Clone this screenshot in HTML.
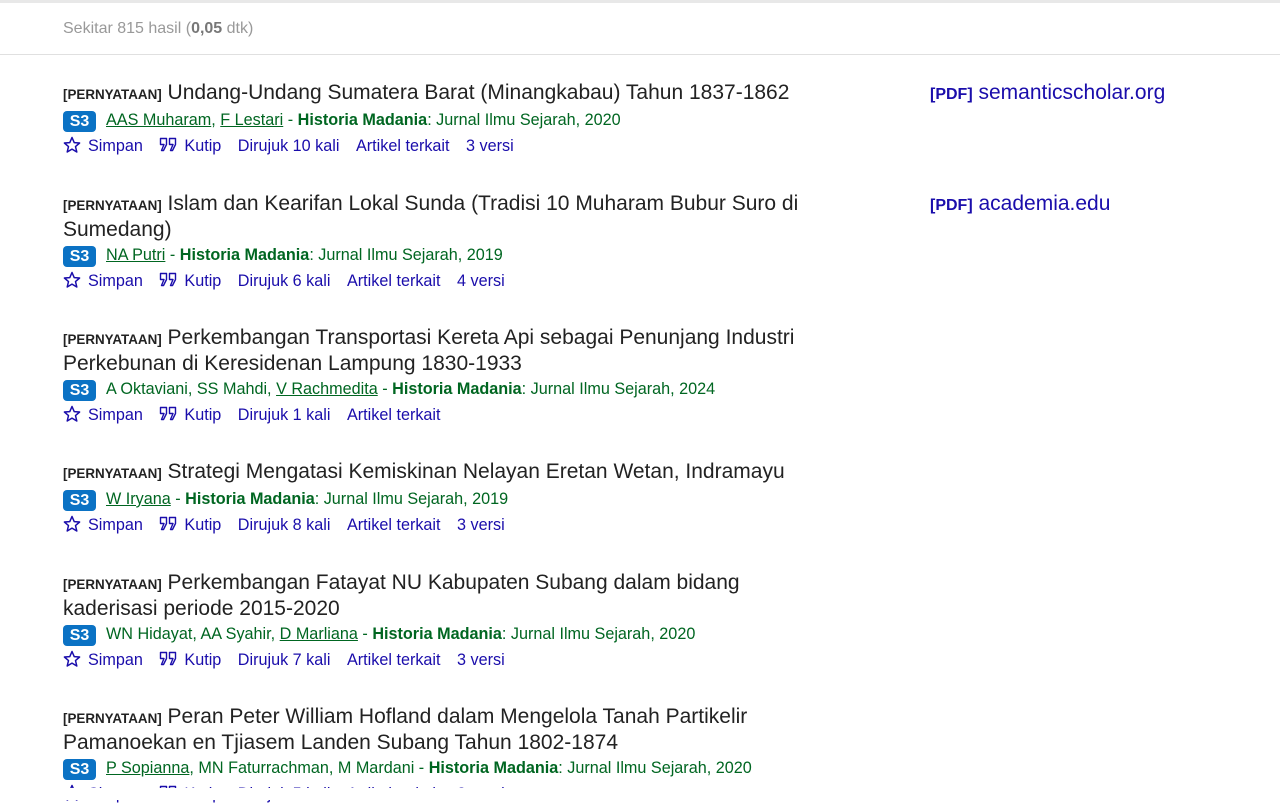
<!DOCTYPE html>
<html><head><meta charset="utf-8"><style>
body{margin:0;background:#fff;font-family:"Liberation Sans",Arial,sans-serif;width:1280px;height:800px;overflow:hidden;position:relative}
.top{position:absolute;left:0;top:0;width:1280px;height:3px;background:#e8e8e8}
.cnt{position:absolute;left:63px;top:19px;font-size:16px;line-height:20px;color:#999}
.cnt b{color:#777}
.div{position:absolute;left:0;top:54px;width:1280px;height:1px;background:#e0e0e0}
.r{position:absolute;left:63px;width:760px}
.t{font-size:21px;line-height:24px;color:#222}
.t small{font-size:13.4px;font-weight:bold;color:#222}
.m{margin-top:0;height:26px;line-height:26px;font-size:16.2px;color:#006621;white-space:nowrap}
.m u{text-decoration:underline}
.b{display:inline-block;background:#0b72c4;color:#fff;font-weight:bold;font-size:16px;width:33px;height:21px;line-height:21px;text-align:center;border-radius:4px;margin-right:10px;vertical-align:-1px}
.a{height:26px;line-height:26px;font-size:16.2px;color:#1a0dab;white-space:nowrap}
.a span{margin-right:16.5px}
.a svg{vertical-align:-3px;margin-right:7px}
.p{position:absolute;left:930px;font-size:21px;line-height:24px;color:#1a0dab}
.p small{font-size:16px;font-weight:bold}
.clip{position:absolute;left:0;top:788px;width:1280px;height:12px;background:#fff}
</style></head><body>
<div class="top"></div>
<div class="cnt">Sekitar 815 hasil (<b>0,05</b> dtk)</div>
<div class="div"></div>

<svg width="0" height="0" style="position:absolute"><defs>
<symbol id="star" viewBox="0 0 18 18"><path d="M9 1.5l2.2 5.1 5.4.4-4.1 3.6 1.3 5.4L9 13.1 4.2 16l1.3-5.4L1.4 7l5.4-.4z" fill="none" stroke="#1a0dab" stroke-width="1.5" stroke-linejoin="round"/></symbol>
<symbol id="q" viewBox="0 0 18 18"><path d="M1.5 2.5h6v6l-3 6h-2l2.5-6h-3.5zM10.5 2.5h6v6l-3 6h-2l2.5-6h-3.5z" fill="none" stroke="#1a0dab" stroke-width="1.4" stroke-linejoin="round"/></symbol>
</defs></svg>

<div class="r" style="top:81px">
<div class="t"><small>[PERNYATAAN]</small> Undang-Undang Sumatera Barat (Minangkabau) Tahun 1837-1862</div>
<div class="m"><span class="b">S3</span><u>AAS Muharam</u>, <u>F Lestari</u> - <b>Historia Madania</b>: Jurnal Ilmu Sejarah, 2020</div>
<div class="a"><span><svg width="18" height="18"><use href="#star"/></svg>Simpan</span><span><svg width="18" height="18"><use href="#q"/></svg>Kutip</span><span>Dirujuk 10 kali</span><span>Artikel terkait</span><span>3 versi</span></div>
</div>
<div class="p" style="top:81px"><small>[PDF]</small> semanticscholar.org</div>

<div class="r" style="top:192px">
<div class="t"><small>[PERNYATAAN]</small> Islam dan Kearifan Lokal Sunda (Tradisi 10 Muharam Bubur Suro di Sumedang)</div>
<div class="m"><span class="b">S3</span><u>NA Putri</u> - <b>Historia Madania</b>: Jurnal Ilmu Sejarah, 2019</div>
<div class="a"><span><svg width="18" height="18"><use href="#star"/></svg>Simpan</span><span><svg width="18" height="18"><use href="#q"/></svg>Kutip</span><span>Dirujuk 6 kali</span><span>Artikel terkait</span><span>4 versi</span></div>
</div>
<div class="p" style="top:192px"><small>[PDF]</small> academia.edu</div>

<div class="r" style="top:326px">
<div class="t"><small>[PERNYATAAN]</small> Perkembangan Transportasi Kereta Api sebagai Penunjang Industri Perkebunan di Keresidenan Lampung 1830-1933</div>
<div class="m"><span class="b">S3</span>A Oktaviani, SS Mahdi, <u>V Rachmedita</u> - <b>Historia Madania</b>: Jurnal Ilmu Sejarah, 2024</div>
<div class="a"><span><svg width="18" height="18"><use href="#star"/></svg>Simpan</span><span><svg width="18" height="18"><use href="#q"/></svg>Kutip</span><span>Dirujuk 1 kali</span><span>Artikel terkait</span></div>
</div>

<div class="r" style="top:460px">
<div class="t"><small>[PERNYATAAN]</small> Strategi Mengatasi Kemiskinan Nelayan Eretan Wetan, Indramayu</div>
<div class="m"><span class="b">S3</span><u>W Iryana</u> - <b>Historia Madania</b>: Jurnal Ilmu Sejarah, 2019</div>
<div class="a"><span><svg width="18" height="18"><use href="#star"/></svg>Simpan</span><span><svg width="18" height="18"><use href="#q"/></svg>Kutip</span><span>Dirujuk 8 kali</span><span>Artikel terkait</span><span>3 versi</span></div>
</div>

<div class="r" style="top:571px">
<div class="t"><small>[PERNYATAAN]</small> Perkembangan Fatayat NU Kabupaten Subang dalam bidang kaderisasi periode 2015-2020</div>
<div class="m"><span class="b">S3</span>WN Hidayat, AA Syahir, <u>D Marliana</u> - <b>Historia Madania</b>: Jurnal Ilmu Sejarah, 2020</div>
<div class="a"><span><svg width="18" height="18"><use href="#star"/></svg>Simpan</span><span><svg width="18" height="18"><use href="#q"/></svg>Kutip</span><span>Dirujuk 7 kali</span><span>Artikel terkait</span><span>3 versi</span></div>
</div>

<div class="r" style="top:705px">
<div class="t"><small>[PERNYATAAN]</small> Peran Peter William Hofland dalam Mengelola Tanah Partikelir Pamanoekan en Tjiasem Landen Subang Tahun 1802-1874</div>
<div class="m"><span class="b">S3</span><u>P Sopianna</u>, MN Faturrachman, M Mardani - <b>Historia Madania</b>: Jurnal Ilmu Sejarah, 2020</div>
<div class="a"><span><svg width="18" height="18"><use href="#star"/></svg>Simpan</span><span><svg width="18" height="18"><use href="#q"/></svg>Kutip</span><span>Dirujuk 5 kali</span><span>Artikel terkait</span><span>3 versi</span></div>
</div>
<div class="clip"></div>
</body></html>
